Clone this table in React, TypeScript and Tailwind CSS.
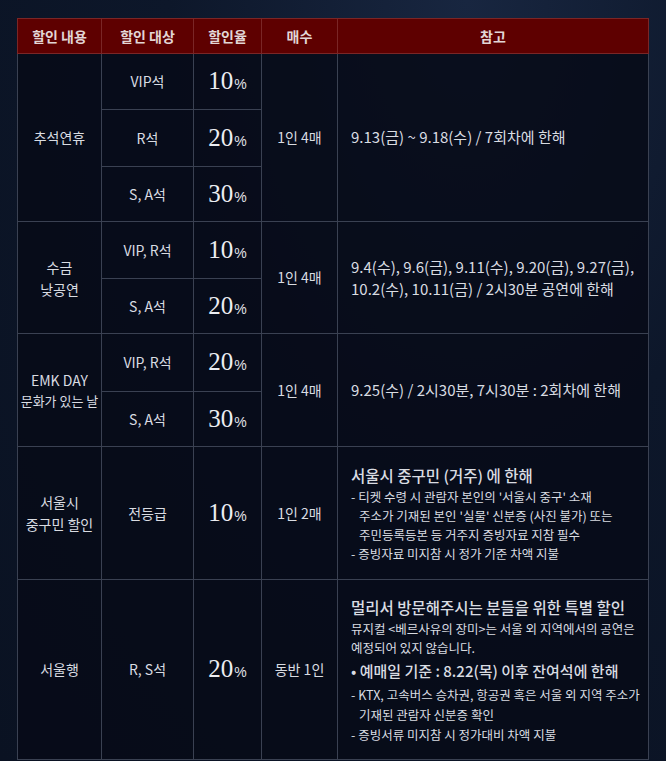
import React from "react";

const td =
  "border border-[#3a4152] text-center align-middle text-[14px] text-[#d9dce2]";
const note =
  "border border-[#3a4152] text-left align-middle pl-[13px] pr-2 text-[#d9dce2]";

function Rate({ value }: { value: string }) {
  return (
    <span className="inline-flex items-baseline">
      <span className="font-['Liberation_Serif',serif] text-[25px] leading-none text-[#eceef2]">
        {value}
      </span>
      <span className="ml-[1px] font-['Liberation_Sans',sans-serif] text-[14px] text-[#e0e2e6]">
        %
      </span>
    </span>
  );
}

export default function App() {
  return (
    <div className="min-h-[761px] w-full bg-[radial-gradient(ellipse_at_70%_0%,#182640_0%,#0d172a_45%,#0a1222_100%)] pt-[18px] font-['Noto_Sans_CJK_KR','Noto_Sans',sans-serif]">
      <table className="ml-[17px] w-[631px] table-fixed border-collapse">
        <colgroup>
          <col className="w-[84px]" />
          <col className="w-[92px]" />
          <col className="w-[68px]" />
          <col className="w-[76px]" />
          <col className="w-[311px]" />
        </colgroup>
        <thead>
          <tr className="h-[35px] bg-[#5e0000]">
            {["할인 내용", "할인 대상", "할인율", "매수", "참고"].map((h) => (
              <th
                key={h}
                className="border border-[#7a2626] text-center text-[14px] font-semibold text-[#e2d6d6]"
              >
                {h}
              </th>
            ))}
          </tr>
        </thead>
        <tbody className="bg-[#070b17]/85">
          <tr className="h-[56px]">
            <td rowSpan={3} className={td}>추석연휴</td>
            <td className={td}>VIP석</td>
            <td className={td}><Rate value="10" /></td>
            <td rowSpan={3} className={td}>1인 4매</td>
            <td rowSpan={3} className={`${note} text-[15px]`}>
              9.13(금) ~ 9.18(수) / 7회차에 한해
            </td>
          </tr>
          <tr className="h-[57px]">
            <td className={td}>R석</td>
            <td className={td}><Rate value="20" /></td>
          </tr>
          <tr className="h-[55px]">
            <td className={td}>S, A석</td>
            <td className={td}><Rate value="30" /></td>
          </tr>

          <tr className="h-[57px]">
            <td rowSpan={2} className={`${td} leading-[22px]`}>
              수금
              <br />
              낮공연
            </td>
            <td className={td}>VIP, R석</td>
            <td className={td}><Rate value="10" /></td>
            <td rowSpan={2} className={td}>1인 4매</td>
            <td rowSpan={2} className={`${note} text-[15px] leading-[22px]`}>
              9.4(수), 9.6(금), 9.11(수), 9.20(금), 9.27(금),
              <br />
              10.2(수), 10.11(금) / 2시30분 공연에 한해
            </td>
          </tr>
          <tr className="h-[55px]">
            <td className={td}>S, A석</td>
            <td className={td}><Rate value="20" /></td>
          </tr>

          <tr className="h-[58px]">
            <td rowSpan={2} className={`${td} leading-[20px]`}>
              <span className="text-[14px]">EMK DAY</span>
              <br />
              <span className="text-[13px]">문화가 있는 날</span>
            </td>
            <td className={td}>VIP, R석</td>
            <td className={td}><Rate value="20" /></td>
            <td rowSpan={2} className={td}>1인 4매</td>
            <td rowSpan={2} className={`${note} text-[15px]`}>
              9.25(수) / 2시30분, 7시30분 : 2회차에 한해
            </td>
          </tr>
          <tr className="h-[55px]">
            <td className={td}>S, A석</td>
            <td className={td}><Rate value="30" /></td>
          </tr>

          <tr className="h-[133px]">
            <td className={`${td} leading-[22px]`}>
              서울시
              <br />
              중구민 할인
            </td>
            <td className={td}>전등급</td>
            <td className={td}><Rate value="10" /></td>
            <td className={td}>1인 2매</td>
            <td className={note}>
              <div className="text-[15.5px] font-medium leading-[24px]">
                서울시 중구민 (거주) 에 한해
              </div>
              <div className="text-[12.5px] leading-[19px]">
                <div>- 티켓 수령 시 관람자 본인의 '서울시 중구' 소재</div>
                <div className="pl-[8px]">
                  주소가 기재된 본인 '실물' 신분증 (사진 불가) 또는
                </div>
                <div className="pl-[8px]">
                  주민등록등본 등 거주지 증빙자료 지참 필수
                </div>
                <div>- 증빙자료 미지참 시 정가 기준 차액 지불</div>
              </div>
            </td>
          </tr>

          <tr className="h-[180px]">
            <td className={td}>서울행</td>
            <td className={td}>R, S석</td>
            <td className={td}><Rate value="20" /></td>
            <td className={td}>동반 1인</td>
            <td className={note}>
              <div className="text-[15.5px] font-medium leading-[24px]">
                멀리서 방문해주시는 분들을 위한 특별 할인
              </div>
              <div className="text-[12.5px] leading-[19px]">
                뮤지컬 &lt;베르사유의 장미&gt;는 서울 외 지역에서의 공연은
                <br />
                예정되어 있지 않습니다.
              </div>
              <div className="py-[2px] text-[15px] font-medium leading-[24px]">
                • 예매일 기준 : 8.22(목) 이후 잔여석에 한해
              </div>
              <div className="text-[12.5px] leading-[20px]">
                <div>- KTX, 고속버스 승차권, 항공권 혹은 서울 외 지역 주소가</div>
                <div className="pl-[8px]">기재된 관람자 신분증 확인</div>
                <div>- 증빙서류 미지참 시 정가대비 차액 지불</div>
              </div>
            </td>
          </tr>
        </tbody>
      </table>
    </div>
  );
}
